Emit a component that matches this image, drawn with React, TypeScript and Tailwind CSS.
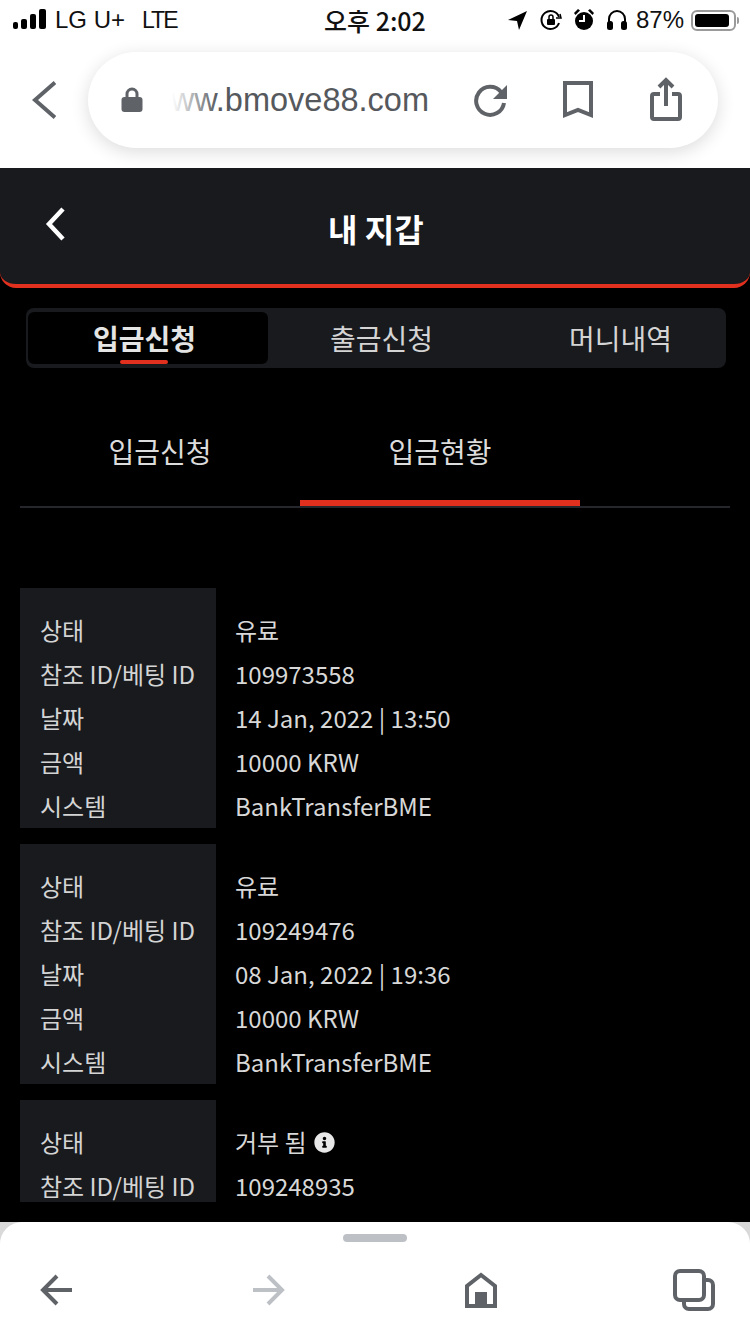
import { FaInfoCircle } from "react-icons/fa";

const cjk = "font-['Noto_Sans_CJK_KR','Noto_Sans',sans-serif]";

interface Row {
  label: string;
  value: string;
  info?: boolean;
}

const cards: Row[][] = [
  [
    { label: "상태", value: "유료" },
    { label: "참조 ID/베팅 ID", value: "109973558" },
    { label: "날짜", value: "14 Jan, 2022 | 13:50" },
    { label: "금액", value: "10000 KRW" },
    { label: "시스템", value: "BankTransferBME" },
  ],
  [
    { label: "상태", value: "유료" },
    { label: "참조 ID/베팅 ID", value: "109249476" },
    { label: "날짜", value: "08 Jan, 2022 | 19:36" },
    { label: "금액", value: "10000 KRW" },
    { label: "시스템", value: "BankTransferBME" },
  ],
  [
    { label: "상태", value: "거부 됨", info: true },
    { label: "참조 ID/베팅 ID", value: "109248935" },
  ],
];

function StatusBar() {
  return (
    <div className="flex h-[40px] items-center pl-[13px] text-[24px] text-[#111] font-['Inter',sans-serif]">
      <svg width="34" height="22" viewBox="0 0 34 22" fill="#000">
        <rect x="0" y="13" width="5" height="7" rx="2" />
        <rect x="8" y="10" width="6" height="10" rx="2" />
        <rect x="17" y="5" width="6" height="15" rx="2" />
        <rect x="26" y="0" width="7" height="20" rx="2" />
      </svg>
      <span className="ml-[8px] w-[87px] whitespace-nowrap font-['Liberation_Sans',sans-serif] text-[24px] leading-none">LG U+</span>
      <span className="w-[120px] font-['Liberation_Sans',sans-serif] text-[23px] leading-none tracking-[-2px]">LTE</span>
      <span className={`ml-[62px] w-[184px] whitespace-nowrap font-medium text-[25px] leading-none ${cjk}`}>오후 2:02</span>
      <svg width="20" height="20" viewBox="0 0 20 20" fill="#000">
        <path d="M0 10 L19 1 L11 20 L9 11 Z" />
      </svg>
      <svg className="ml-[12px]" width="22" height="22" viewBox="0 0 22 22" fill="none" stroke="#000" strokeWidth="2">
        <path d="M19 14 A9 9 0 1 1 19 8" />
        <path d="M16 9 L21 9 L20 5" strokeWidth="1.5" />
        <rect x="7" y="10" width="8" height="6" rx="1" fill="#000" stroke="none" />
        <path d="M9 10 V8 a2 2 0 0 1 4 0 V10" strokeWidth="1.5" />
      </svg>
      <svg className="ml-[11px]" width="22" height="24" viewBox="0 0 22 24" fill="#000">
        <circle cx="11" cy="13" r="9" />
        <path d="M1 5 L5 1 L7 2.5 L2.5 7 Z" />
        <path d="M21 5 L17 1 L15 2.5 L19.5 7 Z" />
        <path d="M11 7 V13 H6" stroke="#fff" strokeWidth="2" fill="none" />
      </svg>
      <svg className="ml-[12px]" width="20" height="22" viewBox="0 0 20 22" fill="none">
        <path d="M2 14 V10 a8 8 0 0 1 16 0 V14" stroke="#000" strokeWidth="2" />
        <rect x="0" y="12" width="6" height="9" rx="2.5" fill="#000" />
        <rect x="14" y="12" width="6" height="9" rx="2.5" fill="#000" />
      </svg>
      <span className="ml-[9px] w-[56px] whitespace-nowrap font-['Liberation_Sans',sans-serif] text-[24px] leading-none">87%</span>
      <div className="ml-[-1px] flex h-[21px] w-[45px] shrink-0 items-center rounded-[6px] border-2 border-[#9a9a9a] p-[2px]">
        <div className="h-full w-[34px] rounded-[3px] bg-black" />
      </div>
      <div className="ml-[1px] h-[7px] w-[2px] shrink-0 rounded-r-full bg-[#9a9a9a]" />
    </div>
  );
}

function AddressBar() {
  return (
    <div className="flex h-[128px] items-start pl-[32px] pt-[12px]">
      <svg className="mt-[29px]" width="24" height="38" viewBox="0 0 24 38" fill="none" stroke="#5f6368" strokeWidth="4">
        <path d="M23 1.5 L3 19 L23 36.5" />
      </svg>
      <div className="ml-[32px] flex h-[96px] w-[630px] items-center rounded-full bg-white pl-[33px] shadow-[0_4px_18px_rgba(0,0,0,0.14)]">
        <svg width="22" height="26" viewBox="0 0 22 26" fill="#5f6368">
          <path d="M6 11 V7 a5 5 0 0 1 10 0 V11" fill="none" stroke="#5f6368" strokeWidth="3" />
          <rect x="0.5" y="10" width="21" height="15" rx="3" />
        </svg>
        <div className="relative ml-[29px] flex w-[257px] justify-end overflow-hidden whitespace-nowrap font-['Liberation_Sans',sans-serif] text-[32.5px] leading-[40px] text-[#55585c]">
          <span>www.bmove88.com</span>
          <div className="absolute inset-y-0 left-0 w-[46px] bg-gradient-to-r from-white to-transparent" />
        </div>
        <svg className="ml-[45px]" width="34" height="34" viewBox="0 0 34 34" fill="none">
          <path d="M27 9 A14 14 0 1 0 30 20" stroke="#5f6368" strokeWidth="4" />
          <path d="M33 2 V16 H19 Z" fill="#5f6368" />
        </svg>
        <svg className="ml-[55px]" width="30" height="38" viewBox="0 0 30 38" fill="none" stroke="#5f6368" strokeWidth="4">
          <path d="M2 2 H28 V34 L15 29 L2 34 Z" />
        </svg>
        <svg className="ml-[57px] mt-[-2px]" width="32" height="44" viewBox="0 0 32 44" fill="none" stroke="#5f6368" strokeWidth="4">
          <path d="M10 17 H4 a2 2 0 0 0 -2 2 V40 a2 2 0 0 0 2 2 H28 a2 2 0 0 0 2 -2 V19 a2 2 0 0 0 -2 -2 H22" />
          <path d="M16 29 V4" />
          <path d="M9 10 L16 3 L23 10" />
        </svg>
      </div>
    </div>
  );
}

function InfoCard({ rows }: { rows: Row[] }) {
  return (
    <div className="flex shrink-0">
      <div className="w-[196px] bg-[#181a1e] pl-[20px] pt-[20px]">
        {rows.map((row) => (
          <div key={row.label} className="h-[44px] whitespace-nowrap text-[24px] leading-[44px] text-[#d4d4d4]">
            {row.label}
          </div>
        ))}
      </div>
      <div className="pl-[19px] pt-[20px]">
        {rows.map((row) => (
          <div key={row.label} className="flex h-[44px] items-center whitespace-nowrap text-[24px] leading-[44px] text-[#d8d8d8]">
            {row.value}
            {row.info && <FaInfoCircle className="ml-[7px] text-[21px] text-[#e8e8e8]" />}
          </div>
        ))}
      </div>
    </div>
  );
}

function BottomBar() {
  return (
    <div className="h-[112px] bg-[#d9d9d9]">
      <div className="flex h-full flex-col items-center rounded-t-[22px] bg-white pt-[12px]">
        <div className="h-[8px] w-[64px] rounded-full bg-[#bdc1c6]" />
        <div className="mt-[27px] flex w-full items-center pl-[40px]">
          <svg width="32" height="32" viewBox="0 0 32 32" fill="none" stroke="#5f6368" strokeWidth="4">
            <path d="M32 16 H3" />
            <path d="M17 2 L3 16 L17 30" />
          </svg>
          <svg className="ml-[181px]" width="32" height="32" viewBox="0 0 32 32" fill="none" stroke="#bdc1c6" strokeWidth="4">
            <path d="M0 16 H29" />
            <path d="M15 2 L29 16 L15 30" />
          </svg>
          <svg className="ml-[180px]" width="32" height="36" viewBox="0 0 32 36" fill="none">
            <path d="M2 34 V14 L16 3 L30 14 V34 Z" stroke="#5f6368" strokeWidth="4" />
            <rect x="10" y="20" width="12" height="14" fill="#5f6368" />
          </svg>
          <svg className="ml-[176px]" width="42" height="42" viewBox="0 0 42 42" fill="none" stroke="#5f6368" strokeWidth="4">
            <rect x="2" y="2" width="29" height="29" rx="5" />
            <path d="M33 11 H35 a5 5 0 0 1 5 5 V35 a5 5 0 0 1 -5 5 H16 a5 5 0 0 1 -5 -5 V33" />
          </svg>
        </div>
      </div>
    </div>
  );
}

export default function App() {
  return (
    <div className={`flex h-[1334px] w-[750px] flex-col overflow-hidden bg-black ${cjk}`}>
      <div className="h-[168px] shrink-0 bg-white">
        <StatusBar />
        <AddressBar />
      </div>

      <div className="flex h-[120px] shrink-0 items-center rounded-b-[16px] border-b-4 border-[#e1301e] bg-[#181a1e]">
        <svg className="ml-[45px] mt-[-4px] shrink-0" width="20" height="34" viewBox="0 0 20 34" fill="none" stroke="#fff" strokeWidth="4.5">
          <path d="M18 2 L4 17 L18 32" />
        </svg>
        <div className="ml-[263px] mt-[4px] whitespace-nowrap text-[32px] font-bold leading-none text-white">내 지갑</div>
      </div>

      <div className="ml-[26px] mt-[20px] flex h-[60px] w-[700px] shrink-0 items-center rounded-[8px] bg-[#181a1e] pl-[2px] text-[28px] text-[#d4d4d4]">
        <div className="relative h-[52px] w-[240px] rounded-[6px] bg-black pl-[65px] font-bold leading-[52px] text-[#e4e4e4]">
          입금신청
          <div className="absolute bottom-0 left-[92px] h-[4px] w-[48px] rounded-full bg-[#e1301e]" />
        </div>
        <div className="ml-[62px] whitespace-nowrap">출금신청</div>
        <div className="ml-[136px] whitespace-nowrap">머니내역</div>
      </div>

      <div className="mx-[20px] mt-[32px] flex h-[108px] shrink-0 border-b-2 border-[#25272d] text-[28px] text-[#dcdcdc]">
        <div className="flex h-[106px] w-[280px] items-center justify-center pb-[4px]">입금신청</div>
        <div className="flex h-[106px] w-[280px] items-center justify-center border-b-[6px] border-[#e1301e] pt-[2px]">입금현황</div>
      </div>

      <div className="mx-[20px] mt-[80px] flex h-[614px] shrink-0 flex-col gap-[16px] overflow-hidden">
        {cards.map((rows) => (
          <InfoCard key={rows[1].value} rows={rows} />
        ))}
      </div>

      <div className="mt-auto">
        <BottomBar />
      </div>
    </div>
  );
}
